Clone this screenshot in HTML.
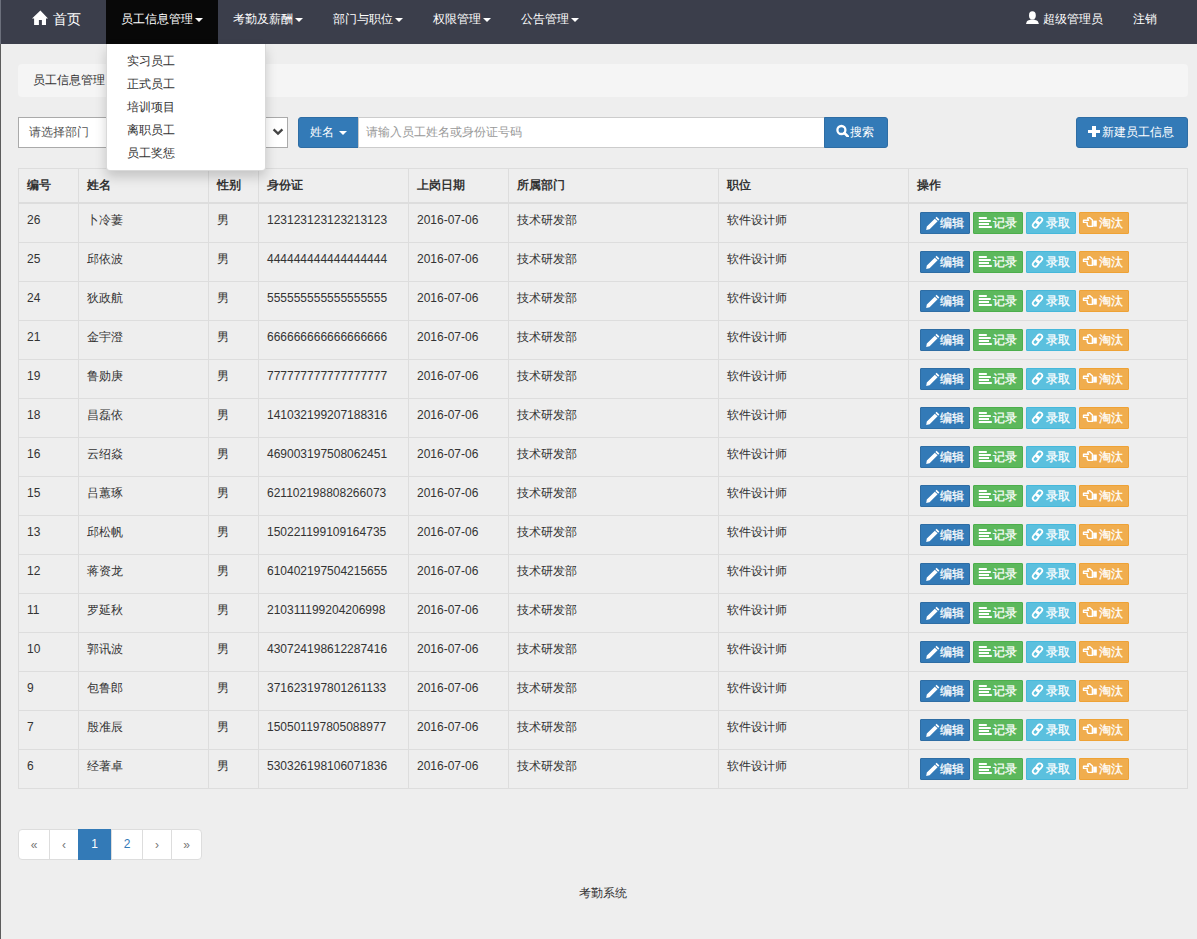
<!DOCTYPE html>
<html><head><meta charset="utf-8">
<style>
*{box-sizing:border-box;margin:0;padding:0}
html,body{width:1197px;height:939px;overflow:hidden}
body{font-family:"Liberation Sans",sans-serif;font-size:12px;line-height:17px;color:#333;background:#eeeeee;position:relative}
.lb{position:absolute;left:0;top:0;width:1px;height:939px;background:linear-gradient(#6c707c 0,#6c707c 44px,#5c5c5c 44px);z-index:10}
.abs{position:absolute;white-space:nowrap}
.nav{position:absolute;left:0;top:0;width:1197px;height:44px;background:#3b3e4b}
.nav .t{position:absolute;top:11px;color:#fff;font-size:12px;line-height:17px;white-space:nowrap}
.act{position:absolute;left:106px;top:0;width:112px;height:44px;background:#080808}
.caret{position:absolute;width:0;height:0;border-top:4px solid #fff;border-left:4px solid transparent;border-right:4px solid transparent}
.crumb{position:absolute;left:18px;top:64px;width:1170px;height:33px;background:#f5f5f5;border-radius:4px}
.dd{position:absolute;left:106px;top:44px;width:160px;height:127px;background:#fff;border:1px solid rgba(0,0,0,.15);border-top:none;border-radius:0 0 4px 4px;box-shadow:0 6px 12px rgba(0,0,0,.175);z-index:5}
.dd div{position:absolute;left:20px;font-size:12px;color:#333;line-height:17px}
.box{position:absolute;background:#fff;border:1px solid #ccc}
.btn{position:absolute;background:#337ab7;border:1px solid #2e6da4}
table{position:absolute;left:18px;top:168px;width:1169px;border-collapse:collapse;table-layout:fixed}
td,th{border:1px solid #ddd;text-align:left;vertical-align:top;font-size:12px;line-height:17px;padding:8px}
th{font-weight:bold;border-bottom:2px solid #ddd}
tr.r{height:39px}
td.op{padding:8px 0 0 11px;white-space:nowrap;font-size:0}
.ab{display:inline-block;position:relative;width:50px;height:22px;border:1px solid;border-radius:1px;margin-right:3px;vertical-align:top}
.ab .ic{position:absolute}
.ab b{position:absolute;left:19px;top:2px;font-weight:normal;font-size:12px;line-height:17px;color:#fff;-webkit-text-stroke:0.25px #fff}
.pg{position:absolute;top:829px;height:31px;background:#fff;border:1px solid #ddd;text-align:center;line-height:30px;font-size:12px;color:#337ab7}
.foot{position:absolute;left:579px;top:885px;font-size:12px;line-height:17px;color:#333}
</style></head><body>
<div class="lb"></div>
<div class="nav">
  <div class="act"></div>
  <svg class="abs" style="left:32px;top:10px" width="16" height="15" viewBox="0 0 16 15"><path d="M8.4 0.6 L16 8.5 H14 V15 H9.9 V10 H6.9 V15 H2.1 V8.5 H0 Z" fill="#fff"/></svg>
  <div class="t" style="left:53px;font-size:14px;top:11px">首页</div>
  <div class="t" style="left:121px">员工信息管理</div><div class="caret" style="left:195px;top:18px"></div>
  <div class="t" style="left:233px">考勤及薪酬</div><div class="caret" style="left:295px;top:18px"></div>
  <div class="t" style="left:333px">部门与职位</div><div class="caret" style="left:395px;top:18px"></div>
  <div class="t" style="left:433px">权限管理</div><div class="caret" style="left:483px;top:18px"></div>
  <div class="t" style="left:521px">公告管理</div><div class="caret" style="left:571px;top:18px"></div>
  <svg class="abs" style="left:1026px;top:11px" width="13" height="13" viewBox="0 0 13 13"><ellipse cx="6.4" cy="4.4" rx="3.4" ry="4.1" fill="#fff"/><path d="M0 13 L0.8 10.6 C1.6 9.6 3.6 9.2 4.8 8.6 H8 C9.2 9.2 11.2 9.6 12 10.6 L12.9 13 Z" fill="#fff"/></svg>
  <div class="t" style="left:1043px">超级管理员</div>
  <div class="t" style="left:1133px">注销</div>
</div>
<div class="crumb"></div>
<div class="abs" style="left:33px;top:72px">员工信息管理</div>
<div class="dd">
  <div style="top:9px">实习员工</div>
  <div style="top:32px">正式员工</div>
  <div style="top:55px">培训项目</div>
  <div style="top:78px">离职员工</div>
  <div style="top:101px">员工奖惩</div>
</div>
<div class="box" style="left:18px;top:117px;width:270px;height:31px;border-color:#aaa"></div>
<div class="abs" style="left:29px;top:124px;color:#555">请选择部门</div>
<svg class="abs" style="left:272px;top:128px" width="12" height="8" viewBox="0 0 12 8"><path d="M1.6 1.4 L6 5.6 L10.4 1.4" fill="none" stroke="#444" stroke-width="2.3"/></svg>
<div class="btn" style="left:298px;top:117px;width:61px;height:31px;border-radius:3px 0 0 3px"></div>
<div class="abs" style="left:310px;top:124px;color:#fff">姓名</div><div class="caret" style="left:339px;top:131px"></div>
<div class="box" style="left:358px;top:117px;width:467px;height:31px"></div>
<div class="abs" style="left:366px;top:124px;color:#999">请输入员工姓名或身份证号码</div>
<div class="btn" style="left:824px;top:117px;width:64px;height:31px;border-radius:0 3px 3px 0"></div>
<svg class="abs" style="left:836px;top:124px" width="13" height="13" viewBox="0 0 13 13"><circle cx="5.4" cy="6" r="4" fill="none" stroke="#fff" stroke-width="2.3"/><path d="M8.4 9 L11.8 12.4" stroke="#fff" stroke-width="2.6" stroke-linecap="round"/></svg>
<div class="abs" style="left:850px;top:124px;color:#fff">搜索</div>
<div class="btn" style="left:1076px;top:117px;width:112px;height:31px;border-radius:3px"></div>
<svg class="abs" style="left:1088px;top:125px" width="12" height="12" viewBox="0 0 12 12"><rect x="4" y="1" width="4" height="11" fill="#fff"/><rect x="0" y="5" width="12" height="3" fill="#fff"/></svg>
<div class="abs" style="left:1102px;top:124px;color:#fff">新建员工信息</div>
<table>
<colgroup><col style="width:60px"><col style="width:130px"><col style="width:50px"><col style="width:150px"><col style="width:100px"><col style="width:210px"><col style="width:190px"><col style="width:279px"></colgroup>
<tr><th>编号</th><th>姓名</th><th>性别</th><th>身份证</th><th>上岗日期</th><th>所属部门</th><th>职位</th><th>操作</th></tr>
<tr class="r"><td>26</td><td>卜冷萋</td><td>男</td><td>123123123123213123</td><td>2016-07-06</td><td>技术研发部</td><td>软件设计师</td><td class="op"><span class="ab" style="background:#337ab7;border-color:#2e6da4"><svg class="ic" style="left:4px;top:3px;width:15px;height:14px" viewBox="0 0 15 14"><path d="M11.6 0.8 L14.4 3.4 L13.2 4.7 L10.4 2.1 Z M9.8 2.7 L12.6 5.3 L4.6 13.2 L1.2 13.9 L1.8 10.5 Z" fill="#fff"/></svg><b>编辑</b></span><span class="ab" style="background:#5cb85c;border-color:#4cae4c"><svg class="ic" style="left:4px;top:4px;width:14px;height:12px" viewBox="0 0 14 12"><rect x="0.8" y="0" width="8" height="2" fill="#fff"/><rect x="0.8" y="3" width="12" height="2" fill="#fff"/><rect x="0.8" y="6" width="10.2" height="2" fill="#fff"/><rect x="0.8" y="9" width="13" height="2" fill="#fff"/></svg><b>记录</b></span><span class="ab" style="background:#5bc0de;border-color:#46b8da"><svg class="ic" style="left:4px;top:3px;width:13px;height:13px" viewBox="0 0 13 13"><g transform="rotate(40 6.5 6.5)" fill="none" stroke="#fff" stroke-width="1.8"><rect x="4.1" y="0.5" width="4.8" height="6.6" rx="2.4"/><rect x="4.1" y="5.9" width="4.8" height="6.6" rx="2.4"/></g></svg><b>录取</b></span><span class="ab" style="background:#f0ad4e;border-color:#eea236"><svg class="ic" style="left:2px;top:3px;width:16px;height:12px" viewBox="0 0 16 12"><path d="M1.5 4.2 H6.6 L5.6 2.2 L7.6 1.6 L10.4 4 V10.4 H6.2 L5.2 8.8 V6.4 H1.5 Z" fill="none" stroke="#fff" stroke-width="1.4" stroke-linejoin="round"/><rect x="11.2" y="4.6" width="3.6" height="6" fill="#fff"/></svg><b>淘汰</b></span></td></tr>
<tr class="r"><td>25</td><td>邱依波</td><td>男</td><td>444444444444444444</td><td>2016-07-06</td><td>技术研发部</td><td>软件设计师</td><td class="op"><span class="ab" style="background:#337ab7;border-color:#2e6da4"><svg class="ic" style="left:4px;top:3px;width:15px;height:14px" viewBox="0 0 15 14"><path d="M11.6 0.8 L14.4 3.4 L13.2 4.7 L10.4 2.1 Z M9.8 2.7 L12.6 5.3 L4.6 13.2 L1.2 13.9 L1.8 10.5 Z" fill="#fff"/></svg><b>编辑</b></span><span class="ab" style="background:#5cb85c;border-color:#4cae4c"><svg class="ic" style="left:4px;top:4px;width:14px;height:12px" viewBox="0 0 14 12"><rect x="0.8" y="0" width="8" height="2" fill="#fff"/><rect x="0.8" y="3" width="12" height="2" fill="#fff"/><rect x="0.8" y="6" width="10.2" height="2" fill="#fff"/><rect x="0.8" y="9" width="13" height="2" fill="#fff"/></svg><b>记录</b></span><span class="ab" style="background:#5bc0de;border-color:#46b8da"><svg class="ic" style="left:4px;top:3px;width:13px;height:13px" viewBox="0 0 13 13"><g transform="rotate(40 6.5 6.5)" fill="none" stroke="#fff" stroke-width="1.8"><rect x="4.1" y="0.5" width="4.8" height="6.6" rx="2.4"/><rect x="4.1" y="5.9" width="4.8" height="6.6" rx="2.4"/></g></svg><b>录取</b></span><span class="ab" style="background:#f0ad4e;border-color:#eea236"><svg class="ic" style="left:2px;top:3px;width:16px;height:12px" viewBox="0 0 16 12"><path d="M1.5 4.2 H6.6 L5.6 2.2 L7.6 1.6 L10.4 4 V10.4 H6.2 L5.2 8.8 V6.4 H1.5 Z" fill="none" stroke="#fff" stroke-width="1.4" stroke-linejoin="round"/><rect x="11.2" y="4.6" width="3.6" height="6" fill="#fff"/></svg><b>淘汰</b></span></td></tr>
<tr class="r"><td>24</td><td>狄政航</td><td>男</td><td>555555555555555555</td><td>2016-07-06</td><td>技术研发部</td><td>软件设计师</td><td class="op"><span class="ab" style="background:#337ab7;border-color:#2e6da4"><svg class="ic" style="left:4px;top:3px;width:15px;height:14px" viewBox="0 0 15 14"><path d="M11.6 0.8 L14.4 3.4 L13.2 4.7 L10.4 2.1 Z M9.8 2.7 L12.6 5.3 L4.6 13.2 L1.2 13.9 L1.8 10.5 Z" fill="#fff"/></svg><b>编辑</b></span><span class="ab" style="background:#5cb85c;border-color:#4cae4c"><svg class="ic" style="left:4px;top:4px;width:14px;height:12px" viewBox="0 0 14 12"><rect x="0.8" y="0" width="8" height="2" fill="#fff"/><rect x="0.8" y="3" width="12" height="2" fill="#fff"/><rect x="0.8" y="6" width="10.2" height="2" fill="#fff"/><rect x="0.8" y="9" width="13" height="2" fill="#fff"/></svg><b>记录</b></span><span class="ab" style="background:#5bc0de;border-color:#46b8da"><svg class="ic" style="left:4px;top:3px;width:13px;height:13px" viewBox="0 0 13 13"><g transform="rotate(40 6.5 6.5)" fill="none" stroke="#fff" stroke-width="1.8"><rect x="4.1" y="0.5" width="4.8" height="6.6" rx="2.4"/><rect x="4.1" y="5.9" width="4.8" height="6.6" rx="2.4"/></g></svg><b>录取</b></span><span class="ab" style="background:#f0ad4e;border-color:#eea236"><svg class="ic" style="left:2px;top:3px;width:16px;height:12px" viewBox="0 0 16 12"><path d="M1.5 4.2 H6.6 L5.6 2.2 L7.6 1.6 L10.4 4 V10.4 H6.2 L5.2 8.8 V6.4 H1.5 Z" fill="none" stroke="#fff" stroke-width="1.4" stroke-linejoin="round"/><rect x="11.2" y="4.6" width="3.6" height="6" fill="#fff"/></svg><b>淘汰</b></span></td></tr>
<tr class="r"><td>21</td><td>金宇澄</td><td>男</td><td>666666666666666666</td><td>2016-07-06</td><td>技术研发部</td><td>软件设计师</td><td class="op"><span class="ab" style="background:#337ab7;border-color:#2e6da4"><svg class="ic" style="left:4px;top:3px;width:15px;height:14px" viewBox="0 0 15 14"><path d="M11.6 0.8 L14.4 3.4 L13.2 4.7 L10.4 2.1 Z M9.8 2.7 L12.6 5.3 L4.6 13.2 L1.2 13.9 L1.8 10.5 Z" fill="#fff"/></svg><b>编辑</b></span><span class="ab" style="background:#5cb85c;border-color:#4cae4c"><svg class="ic" style="left:4px;top:4px;width:14px;height:12px" viewBox="0 0 14 12"><rect x="0.8" y="0" width="8" height="2" fill="#fff"/><rect x="0.8" y="3" width="12" height="2" fill="#fff"/><rect x="0.8" y="6" width="10.2" height="2" fill="#fff"/><rect x="0.8" y="9" width="13" height="2" fill="#fff"/></svg><b>记录</b></span><span class="ab" style="background:#5bc0de;border-color:#46b8da"><svg class="ic" style="left:4px;top:3px;width:13px;height:13px" viewBox="0 0 13 13"><g transform="rotate(40 6.5 6.5)" fill="none" stroke="#fff" stroke-width="1.8"><rect x="4.1" y="0.5" width="4.8" height="6.6" rx="2.4"/><rect x="4.1" y="5.9" width="4.8" height="6.6" rx="2.4"/></g></svg><b>录取</b></span><span class="ab" style="background:#f0ad4e;border-color:#eea236"><svg class="ic" style="left:2px;top:3px;width:16px;height:12px" viewBox="0 0 16 12"><path d="M1.5 4.2 H6.6 L5.6 2.2 L7.6 1.6 L10.4 4 V10.4 H6.2 L5.2 8.8 V6.4 H1.5 Z" fill="none" stroke="#fff" stroke-width="1.4" stroke-linejoin="round"/><rect x="11.2" y="4.6" width="3.6" height="6" fill="#fff"/></svg><b>淘汰</b></span></td></tr>
<tr class="r"><td>19</td><td>鲁勋庚</td><td>男</td><td>777777777777777777</td><td>2016-07-06</td><td>技术研发部</td><td>软件设计师</td><td class="op"><span class="ab" style="background:#337ab7;border-color:#2e6da4"><svg class="ic" style="left:4px;top:3px;width:15px;height:14px" viewBox="0 0 15 14"><path d="M11.6 0.8 L14.4 3.4 L13.2 4.7 L10.4 2.1 Z M9.8 2.7 L12.6 5.3 L4.6 13.2 L1.2 13.9 L1.8 10.5 Z" fill="#fff"/></svg><b>编辑</b></span><span class="ab" style="background:#5cb85c;border-color:#4cae4c"><svg class="ic" style="left:4px;top:4px;width:14px;height:12px" viewBox="0 0 14 12"><rect x="0.8" y="0" width="8" height="2" fill="#fff"/><rect x="0.8" y="3" width="12" height="2" fill="#fff"/><rect x="0.8" y="6" width="10.2" height="2" fill="#fff"/><rect x="0.8" y="9" width="13" height="2" fill="#fff"/></svg><b>记录</b></span><span class="ab" style="background:#5bc0de;border-color:#46b8da"><svg class="ic" style="left:4px;top:3px;width:13px;height:13px" viewBox="0 0 13 13"><g transform="rotate(40 6.5 6.5)" fill="none" stroke="#fff" stroke-width="1.8"><rect x="4.1" y="0.5" width="4.8" height="6.6" rx="2.4"/><rect x="4.1" y="5.9" width="4.8" height="6.6" rx="2.4"/></g></svg><b>录取</b></span><span class="ab" style="background:#f0ad4e;border-color:#eea236"><svg class="ic" style="left:2px;top:3px;width:16px;height:12px" viewBox="0 0 16 12"><path d="M1.5 4.2 H6.6 L5.6 2.2 L7.6 1.6 L10.4 4 V10.4 H6.2 L5.2 8.8 V6.4 H1.5 Z" fill="none" stroke="#fff" stroke-width="1.4" stroke-linejoin="round"/><rect x="11.2" y="4.6" width="3.6" height="6" fill="#fff"/></svg><b>淘汰</b></span></td></tr>
<tr class="r"><td>18</td><td>昌磊依</td><td>男</td><td>141032199207188316</td><td>2016-07-06</td><td>技术研发部</td><td>软件设计师</td><td class="op"><span class="ab" style="background:#337ab7;border-color:#2e6da4"><svg class="ic" style="left:4px;top:3px;width:15px;height:14px" viewBox="0 0 15 14"><path d="M11.6 0.8 L14.4 3.4 L13.2 4.7 L10.4 2.1 Z M9.8 2.7 L12.6 5.3 L4.6 13.2 L1.2 13.9 L1.8 10.5 Z" fill="#fff"/></svg><b>编辑</b></span><span class="ab" style="background:#5cb85c;border-color:#4cae4c"><svg class="ic" style="left:4px;top:4px;width:14px;height:12px" viewBox="0 0 14 12"><rect x="0.8" y="0" width="8" height="2" fill="#fff"/><rect x="0.8" y="3" width="12" height="2" fill="#fff"/><rect x="0.8" y="6" width="10.2" height="2" fill="#fff"/><rect x="0.8" y="9" width="13" height="2" fill="#fff"/></svg><b>记录</b></span><span class="ab" style="background:#5bc0de;border-color:#46b8da"><svg class="ic" style="left:4px;top:3px;width:13px;height:13px" viewBox="0 0 13 13"><g transform="rotate(40 6.5 6.5)" fill="none" stroke="#fff" stroke-width="1.8"><rect x="4.1" y="0.5" width="4.8" height="6.6" rx="2.4"/><rect x="4.1" y="5.9" width="4.8" height="6.6" rx="2.4"/></g></svg><b>录取</b></span><span class="ab" style="background:#f0ad4e;border-color:#eea236"><svg class="ic" style="left:2px;top:3px;width:16px;height:12px" viewBox="0 0 16 12"><path d="M1.5 4.2 H6.6 L5.6 2.2 L7.6 1.6 L10.4 4 V10.4 H6.2 L5.2 8.8 V6.4 H1.5 Z" fill="none" stroke="#fff" stroke-width="1.4" stroke-linejoin="round"/><rect x="11.2" y="4.6" width="3.6" height="6" fill="#fff"/></svg><b>淘汰</b></span></td></tr>
<tr class="r"><td>16</td><td>云绍焱</td><td>男</td><td>469003197508062451</td><td>2016-07-06</td><td>技术研发部</td><td>软件设计师</td><td class="op"><span class="ab" style="background:#337ab7;border-color:#2e6da4"><svg class="ic" style="left:4px;top:3px;width:15px;height:14px" viewBox="0 0 15 14"><path d="M11.6 0.8 L14.4 3.4 L13.2 4.7 L10.4 2.1 Z M9.8 2.7 L12.6 5.3 L4.6 13.2 L1.2 13.9 L1.8 10.5 Z" fill="#fff"/></svg><b>编辑</b></span><span class="ab" style="background:#5cb85c;border-color:#4cae4c"><svg class="ic" style="left:4px;top:4px;width:14px;height:12px" viewBox="0 0 14 12"><rect x="0.8" y="0" width="8" height="2" fill="#fff"/><rect x="0.8" y="3" width="12" height="2" fill="#fff"/><rect x="0.8" y="6" width="10.2" height="2" fill="#fff"/><rect x="0.8" y="9" width="13" height="2" fill="#fff"/></svg><b>记录</b></span><span class="ab" style="background:#5bc0de;border-color:#46b8da"><svg class="ic" style="left:4px;top:3px;width:13px;height:13px" viewBox="0 0 13 13"><g transform="rotate(40 6.5 6.5)" fill="none" stroke="#fff" stroke-width="1.8"><rect x="4.1" y="0.5" width="4.8" height="6.6" rx="2.4"/><rect x="4.1" y="5.9" width="4.8" height="6.6" rx="2.4"/></g></svg><b>录取</b></span><span class="ab" style="background:#f0ad4e;border-color:#eea236"><svg class="ic" style="left:2px;top:3px;width:16px;height:12px" viewBox="0 0 16 12"><path d="M1.5 4.2 H6.6 L5.6 2.2 L7.6 1.6 L10.4 4 V10.4 H6.2 L5.2 8.8 V6.4 H1.5 Z" fill="none" stroke="#fff" stroke-width="1.4" stroke-linejoin="round"/><rect x="11.2" y="4.6" width="3.6" height="6" fill="#fff"/></svg><b>淘汰</b></span></td></tr>
<tr class="r"><td>15</td><td>吕蕙琢</td><td>男</td><td>621102198808266073</td><td>2016-07-06</td><td>技术研发部</td><td>软件设计师</td><td class="op"><span class="ab" style="background:#337ab7;border-color:#2e6da4"><svg class="ic" style="left:4px;top:3px;width:15px;height:14px" viewBox="0 0 15 14"><path d="M11.6 0.8 L14.4 3.4 L13.2 4.7 L10.4 2.1 Z M9.8 2.7 L12.6 5.3 L4.6 13.2 L1.2 13.9 L1.8 10.5 Z" fill="#fff"/></svg><b>编辑</b></span><span class="ab" style="background:#5cb85c;border-color:#4cae4c"><svg class="ic" style="left:4px;top:4px;width:14px;height:12px" viewBox="0 0 14 12"><rect x="0.8" y="0" width="8" height="2" fill="#fff"/><rect x="0.8" y="3" width="12" height="2" fill="#fff"/><rect x="0.8" y="6" width="10.2" height="2" fill="#fff"/><rect x="0.8" y="9" width="13" height="2" fill="#fff"/></svg><b>记录</b></span><span class="ab" style="background:#5bc0de;border-color:#46b8da"><svg class="ic" style="left:4px;top:3px;width:13px;height:13px" viewBox="0 0 13 13"><g transform="rotate(40 6.5 6.5)" fill="none" stroke="#fff" stroke-width="1.8"><rect x="4.1" y="0.5" width="4.8" height="6.6" rx="2.4"/><rect x="4.1" y="5.9" width="4.8" height="6.6" rx="2.4"/></g></svg><b>录取</b></span><span class="ab" style="background:#f0ad4e;border-color:#eea236"><svg class="ic" style="left:2px;top:3px;width:16px;height:12px" viewBox="0 0 16 12"><path d="M1.5 4.2 H6.6 L5.6 2.2 L7.6 1.6 L10.4 4 V10.4 H6.2 L5.2 8.8 V6.4 H1.5 Z" fill="none" stroke="#fff" stroke-width="1.4" stroke-linejoin="round"/><rect x="11.2" y="4.6" width="3.6" height="6" fill="#fff"/></svg><b>淘汰</b></span></td></tr>
<tr class="r"><td>13</td><td>邱松帆</td><td>男</td><td>150221199109164735</td><td>2016-07-06</td><td>技术研发部</td><td>软件设计师</td><td class="op"><span class="ab" style="background:#337ab7;border-color:#2e6da4"><svg class="ic" style="left:4px;top:3px;width:15px;height:14px" viewBox="0 0 15 14"><path d="M11.6 0.8 L14.4 3.4 L13.2 4.7 L10.4 2.1 Z M9.8 2.7 L12.6 5.3 L4.6 13.2 L1.2 13.9 L1.8 10.5 Z" fill="#fff"/></svg><b>编辑</b></span><span class="ab" style="background:#5cb85c;border-color:#4cae4c"><svg class="ic" style="left:4px;top:4px;width:14px;height:12px" viewBox="0 0 14 12"><rect x="0.8" y="0" width="8" height="2" fill="#fff"/><rect x="0.8" y="3" width="12" height="2" fill="#fff"/><rect x="0.8" y="6" width="10.2" height="2" fill="#fff"/><rect x="0.8" y="9" width="13" height="2" fill="#fff"/></svg><b>记录</b></span><span class="ab" style="background:#5bc0de;border-color:#46b8da"><svg class="ic" style="left:4px;top:3px;width:13px;height:13px" viewBox="0 0 13 13"><g transform="rotate(40 6.5 6.5)" fill="none" stroke="#fff" stroke-width="1.8"><rect x="4.1" y="0.5" width="4.8" height="6.6" rx="2.4"/><rect x="4.1" y="5.9" width="4.8" height="6.6" rx="2.4"/></g></svg><b>录取</b></span><span class="ab" style="background:#f0ad4e;border-color:#eea236"><svg class="ic" style="left:2px;top:3px;width:16px;height:12px" viewBox="0 0 16 12"><path d="M1.5 4.2 H6.6 L5.6 2.2 L7.6 1.6 L10.4 4 V10.4 H6.2 L5.2 8.8 V6.4 H1.5 Z" fill="none" stroke="#fff" stroke-width="1.4" stroke-linejoin="round"/><rect x="11.2" y="4.6" width="3.6" height="6" fill="#fff"/></svg><b>淘汰</b></span></td></tr>
<tr class="r"><td>12</td><td>蒋资龙</td><td>男</td><td>610402197504215655</td><td>2016-07-06</td><td>技术研发部</td><td>软件设计师</td><td class="op"><span class="ab" style="background:#337ab7;border-color:#2e6da4"><svg class="ic" style="left:4px;top:3px;width:15px;height:14px" viewBox="0 0 15 14"><path d="M11.6 0.8 L14.4 3.4 L13.2 4.7 L10.4 2.1 Z M9.8 2.7 L12.6 5.3 L4.6 13.2 L1.2 13.9 L1.8 10.5 Z" fill="#fff"/></svg><b>编辑</b></span><span class="ab" style="background:#5cb85c;border-color:#4cae4c"><svg class="ic" style="left:4px;top:4px;width:14px;height:12px" viewBox="0 0 14 12"><rect x="0.8" y="0" width="8" height="2" fill="#fff"/><rect x="0.8" y="3" width="12" height="2" fill="#fff"/><rect x="0.8" y="6" width="10.2" height="2" fill="#fff"/><rect x="0.8" y="9" width="13" height="2" fill="#fff"/></svg><b>记录</b></span><span class="ab" style="background:#5bc0de;border-color:#46b8da"><svg class="ic" style="left:4px;top:3px;width:13px;height:13px" viewBox="0 0 13 13"><g transform="rotate(40 6.5 6.5)" fill="none" stroke="#fff" stroke-width="1.8"><rect x="4.1" y="0.5" width="4.8" height="6.6" rx="2.4"/><rect x="4.1" y="5.9" width="4.8" height="6.6" rx="2.4"/></g></svg><b>录取</b></span><span class="ab" style="background:#f0ad4e;border-color:#eea236"><svg class="ic" style="left:2px;top:3px;width:16px;height:12px" viewBox="0 0 16 12"><path d="M1.5 4.2 H6.6 L5.6 2.2 L7.6 1.6 L10.4 4 V10.4 H6.2 L5.2 8.8 V6.4 H1.5 Z" fill="none" stroke="#fff" stroke-width="1.4" stroke-linejoin="round"/><rect x="11.2" y="4.6" width="3.6" height="6" fill="#fff"/></svg><b>淘汰</b></span></td></tr>
<tr class="r"><td>11</td><td>罗延秋</td><td>男</td><td>210311199204206998</td><td>2016-07-06</td><td>技术研发部</td><td>软件设计师</td><td class="op"><span class="ab" style="background:#337ab7;border-color:#2e6da4"><svg class="ic" style="left:4px;top:3px;width:15px;height:14px" viewBox="0 0 15 14"><path d="M11.6 0.8 L14.4 3.4 L13.2 4.7 L10.4 2.1 Z M9.8 2.7 L12.6 5.3 L4.6 13.2 L1.2 13.9 L1.8 10.5 Z" fill="#fff"/></svg><b>编辑</b></span><span class="ab" style="background:#5cb85c;border-color:#4cae4c"><svg class="ic" style="left:4px;top:4px;width:14px;height:12px" viewBox="0 0 14 12"><rect x="0.8" y="0" width="8" height="2" fill="#fff"/><rect x="0.8" y="3" width="12" height="2" fill="#fff"/><rect x="0.8" y="6" width="10.2" height="2" fill="#fff"/><rect x="0.8" y="9" width="13" height="2" fill="#fff"/></svg><b>记录</b></span><span class="ab" style="background:#5bc0de;border-color:#46b8da"><svg class="ic" style="left:4px;top:3px;width:13px;height:13px" viewBox="0 0 13 13"><g transform="rotate(40 6.5 6.5)" fill="none" stroke="#fff" stroke-width="1.8"><rect x="4.1" y="0.5" width="4.8" height="6.6" rx="2.4"/><rect x="4.1" y="5.9" width="4.8" height="6.6" rx="2.4"/></g></svg><b>录取</b></span><span class="ab" style="background:#f0ad4e;border-color:#eea236"><svg class="ic" style="left:2px;top:3px;width:16px;height:12px" viewBox="0 0 16 12"><path d="M1.5 4.2 H6.6 L5.6 2.2 L7.6 1.6 L10.4 4 V10.4 H6.2 L5.2 8.8 V6.4 H1.5 Z" fill="none" stroke="#fff" stroke-width="1.4" stroke-linejoin="round"/><rect x="11.2" y="4.6" width="3.6" height="6" fill="#fff"/></svg><b>淘汰</b></span></td></tr>
<tr class="r"><td>10</td><td>郭讯波</td><td>男</td><td>430724198612287416</td><td>2016-07-06</td><td>技术研发部</td><td>软件设计师</td><td class="op"><span class="ab" style="background:#337ab7;border-color:#2e6da4"><svg class="ic" style="left:4px;top:3px;width:15px;height:14px" viewBox="0 0 15 14"><path d="M11.6 0.8 L14.4 3.4 L13.2 4.7 L10.4 2.1 Z M9.8 2.7 L12.6 5.3 L4.6 13.2 L1.2 13.9 L1.8 10.5 Z" fill="#fff"/></svg><b>编辑</b></span><span class="ab" style="background:#5cb85c;border-color:#4cae4c"><svg class="ic" style="left:4px;top:4px;width:14px;height:12px" viewBox="0 0 14 12"><rect x="0.8" y="0" width="8" height="2" fill="#fff"/><rect x="0.8" y="3" width="12" height="2" fill="#fff"/><rect x="0.8" y="6" width="10.2" height="2" fill="#fff"/><rect x="0.8" y="9" width="13" height="2" fill="#fff"/></svg><b>记录</b></span><span class="ab" style="background:#5bc0de;border-color:#46b8da"><svg class="ic" style="left:4px;top:3px;width:13px;height:13px" viewBox="0 0 13 13"><g transform="rotate(40 6.5 6.5)" fill="none" stroke="#fff" stroke-width="1.8"><rect x="4.1" y="0.5" width="4.8" height="6.6" rx="2.4"/><rect x="4.1" y="5.9" width="4.8" height="6.6" rx="2.4"/></g></svg><b>录取</b></span><span class="ab" style="background:#f0ad4e;border-color:#eea236"><svg class="ic" style="left:2px;top:3px;width:16px;height:12px" viewBox="0 0 16 12"><path d="M1.5 4.2 H6.6 L5.6 2.2 L7.6 1.6 L10.4 4 V10.4 H6.2 L5.2 8.8 V6.4 H1.5 Z" fill="none" stroke="#fff" stroke-width="1.4" stroke-linejoin="round"/><rect x="11.2" y="4.6" width="3.6" height="6" fill="#fff"/></svg><b>淘汰</b></span></td></tr>
<tr class="r"><td>9</td><td>包鲁郎</td><td>男</td><td>371623197801261133</td><td>2016-07-06</td><td>技术研发部</td><td>软件设计师</td><td class="op"><span class="ab" style="background:#337ab7;border-color:#2e6da4"><svg class="ic" style="left:4px;top:3px;width:15px;height:14px" viewBox="0 0 15 14"><path d="M11.6 0.8 L14.4 3.4 L13.2 4.7 L10.4 2.1 Z M9.8 2.7 L12.6 5.3 L4.6 13.2 L1.2 13.9 L1.8 10.5 Z" fill="#fff"/></svg><b>编辑</b></span><span class="ab" style="background:#5cb85c;border-color:#4cae4c"><svg class="ic" style="left:4px;top:4px;width:14px;height:12px" viewBox="0 0 14 12"><rect x="0.8" y="0" width="8" height="2" fill="#fff"/><rect x="0.8" y="3" width="12" height="2" fill="#fff"/><rect x="0.8" y="6" width="10.2" height="2" fill="#fff"/><rect x="0.8" y="9" width="13" height="2" fill="#fff"/></svg><b>记录</b></span><span class="ab" style="background:#5bc0de;border-color:#46b8da"><svg class="ic" style="left:4px;top:3px;width:13px;height:13px" viewBox="0 0 13 13"><g transform="rotate(40 6.5 6.5)" fill="none" stroke="#fff" stroke-width="1.8"><rect x="4.1" y="0.5" width="4.8" height="6.6" rx="2.4"/><rect x="4.1" y="5.9" width="4.8" height="6.6" rx="2.4"/></g></svg><b>录取</b></span><span class="ab" style="background:#f0ad4e;border-color:#eea236"><svg class="ic" style="left:2px;top:3px;width:16px;height:12px" viewBox="0 0 16 12"><path d="M1.5 4.2 H6.6 L5.6 2.2 L7.6 1.6 L10.4 4 V10.4 H6.2 L5.2 8.8 V6.4 H1.5 Z" fill="none" stroke="#fff" stroke-width="1.4" stroke-linejoin="round"/><rect x="11.2" y="4.6" width="3.6" height="6" fill="#fff"/></svg><b>淘汰</b></span></td></tr>
<tr class="r"><td>7</td><td>殷准辰</td><td>男</td><td>150501197805088977</td><td>2016-07-06</td><td>技术研发部</td><td>软件设计师</td><td class="op"><span class="ab" style="background:#337ab7;border-color:#2e6da4"><svg class="ic" style="left:4px;top:3px;width:15px;height:14px" viewBox="0 0 15 14"><path d="M11.6 0.8 L14.4 3.4 L13.2 4.7 L10.4 2.1 Z M9.8 2.7 L12.6 5.3 L4.6 13.2 L1.2 13.9 L1.8 10.5 Z" fill="#fff"/></svg><b>编辑</b></span><span class="ab" style="background:#5cb85c;border-color:#4cae4c"><svg class="ic" style="left:4px;top:4px;width:14px;height:12px" viewBox="0 0 14 12"><rect x="0.8" y="0" width="8" height="2" fill="#fff"/><rect x="0.8" y="3" width="12" height="2" fill="#fff"/><rect x="0.8" y="6" width="10.2" height="2" fill="#fff"/><rect x="0.8" y="9" width="13" height="2" fill="#fff"/></svg><b>记录</b></span><span class="ab" style="background:#5bc0de;border-color:#46b8da"><svg class="ic" style="left:4px;top:3px;width:13px;height:13px" viewBox="0 0 13 13"><g transform="rotate(40 6.5 6.5)" fill="none" stroke="#fff" stroke-width="1.8"><rect x="4.1" y="0.5" width="4.8" height="6.6" rx="2.4"/><rect x="4.1" y="5.9" width="4.8" height="6.6" rx="2.4"/></g></svg><b>录取</b></span><span class="ab" style="background:#f0ad4e;border-color:#eea236"><svg class="ic" style="left:2px;top:3px;width:16px;height:12px" viewBox="0 0 16 12"><path d="M1.5 4.2 H6.6 L5.6 2.2 L7.6 1.6 L10.4 4 V10.4 H6.2 L5.2 8.8 V6.4 H1.5 Z" fill="none" stroke="#fff" stroke-width="1.4" stroke-linejoin="round"/><rect x="11.2" y="4.6" width="3.6" height="6" fill="#fff"/></svg><b>淘汰</b></span></td></tr>
<tr class="r"><td>6</td><td>经著卓</td><td>男</td><td>530326198106071836</td><td>2016-07-06</td><td>技术研发部</td><td>软件设计师</td><td class="op"><span class="ab" style="background:#337ab7;border-color:#2e6da4"><svg class="ic" style="left:4px;top:3px;width:15px;height:14px" viewBox="0 0 15 14"><path d="M11.6 0.8 L14.4 3.4 L13.2 4.7 L10.4 2.1 Z M9.8 2.7 L12.6 5.3 L4.6 13.2 L1.2 13.9 L1.8 10.5 Z" fill="#fff"/></svg><b>编辑</b></span><span class="ab" style="background:#5cb85c;border-color:#4cae4c"><svg class="ic" style="left:4px;top:4px;width:14px;height:12px" viewBox="0 0 14 12"><rect x="0.8" y="0" width="8" height="2" fill="#fff"/><rect x="0.8" y="3" width="12" height="2" fill="#fff"/><rect x="0.8" y="6" width="10.2" height="2" fill="#fff"/><rect x="0.8" y="9" width="13" height="2" fill="#fff"/></svg><b>记录</b></span><span class="ab" style="background:#5bc0de;border-color:#46b8da"><svg class="ic" style="left:4px;top:3px;width:13px;height:13px" viewBox="0 0 13 13"><g transform="rotate(40 6.5 6.5)" fill="none" stroke="#fff" stroke-width="1.8"><rect x="4.1" y="0.5" width="4.8" height="6.6" rx="2.4"/><rect x="4.1" y="5.9" width="4.8" height="6.6" rx="2.4"/></g></svg><b>录取</b></span><span class="ab" style="background:#f0ad4e;border-color:#eea236"><svg class="ic" style="left:2px;top:3px;width:16px;height:12px" viewBox="0 0 16 12"><path d="M1.5 4.2 H6.6 L5.6 2.2 L7.6 1.6 L10.4 4 V10.4 H6.2 L5.2 8.8 V6.4 H1.5 Z" fill="none" stroke="#fff" stroke-width="1.4" stroke-linejoin="round"/><rect x="11.2" y="4.6" width="3.6" height="6" fill="#fff"/></svg><b>淘汰</b></span></td></tr>
</table>
<div class="pg" style="left:18px;width:32px;color:#777;border-radius:4px 0 0 4px">«</div>
<div class="pg" style="left:49px;width:30px;color:#777">‹</div>
<div class="pg" style="left:111px;width:32px;line-height:28px">2</div>
<div class="pg" style="left:142px;width:30px;color:#777">›</div>
<div class="pg" style="left:171px;width:31px;color:#777;border-radius:0 4px 4px 0">»</div>
<div class="pg" style="left:78px;width:33px;background:#337ab7;border-color:#337ab7;color:#fff;line-height:28px">1</div>
<div class="foot">考勤系统</div>
</body></html>
